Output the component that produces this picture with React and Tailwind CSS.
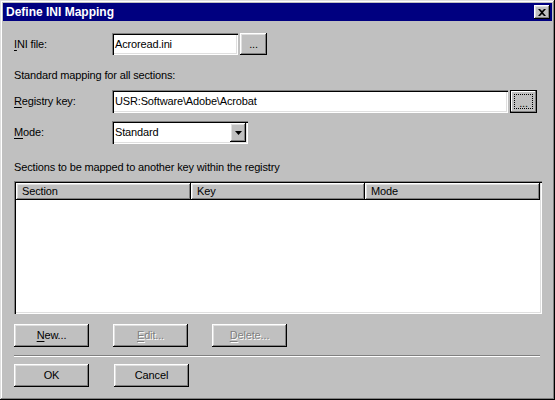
import React from 'react';

const raised =
  'bg-[#c0c0c0] shadow-[inset_-1px_-1px_#000,inset_1px_1px_#fff,inset_-2px_-2px_#808080,inset_2px_2px_#dfdfdf]';
const sunken =
  'bg-white shadow-[inset_1px_1px_#808080,inset_2px_2px_#000,inset_-1px_-1px_#fff,inset_-2px_-2px_#dfdfdf]';

function U({ children }) {
  return <span className="underline underline-offset-2">{children}</span>;
}

function Button({ children, disabled, className = '' }) {
  return (
    <button
      className={`${raised} h-[23px] w-[75px] flex items-center justify-center text-[11px] ${
        disabled ? 'text-[#808080] [text-shadow:1px_1px_0_#fff]' : 'text-black'
      } ${className}`}
    >
      {children}
    </button>
  );
}

function Field({ value, className = '' }) {
  return (
    <div className={`${sunken} h-[22px] flex items-center px-[3px] text-[11px] ${className}`}>
      {value}
    </div>
  );
}

export default function App() {
  return (
    <div
      className="w-[555px] h-[400px] bg-[#c0c0c0] p-[3px] flex flex-col tracking-[-0.15px] shadow-[inset_-1px_-1px_#000,inset_1px_1px_#dfdfdf,inset_-2px_-2px_#808080,inset_2px_2px_#fff] text-black"
      style={{ fontFamily: '"Liberation Sans", Arial, sans-serif' }}
    >
      {/* title bar */}
      <div className="h-[18px] bg-[#000080] flex items-center justify-between pl-[3px] pr-[2px]">
        <span className="text-white font-bold text-[12px] tracking-normal">Define INI Mapping</span>
        <div className={`${raised} w-[16px] h-[14px] flex items-center justify-center`}>
          <svg width="8" height="7" viewBox="0 0 8 7">
            <path d="M0 0h2l2 2 2-2h2L5 3.5 8 7H6L4 5 2 7H0l3-3.5z" fill="#000" />
          </svg>
        </div>
      </div>

      <div className="flex flex-col pl-[11px] pr-[13px]">
        {/* INI file */}
        <div className="flex items-center mt-[12px] h-[22px]">
          <span className="w-[98px] text-[11px]">
            <U>I</U>NI file:
          </span>
          <Field value="Acroread.ini" className="w-[126px]" />
          <Button className="!w-[27px] ml-[2px] !h-[22px]">...</Button>
        </div>

        <div className="mt-[13px] h-[15px] text-[11px] flex items-center">Standard mapping for all sections:</div>

        {/* Registry key */}
        <div className="flex items-center mt-[7px] h-[23px]">
          <span className="w-[98px] text-[11px]">
            <U>R</U>egistry key:
          </span>
          <Field value="USR:Software\Adobe\Acrobat" className="w-[396px] !h-[23px]" />
          <button className="ml-[2px] w-[27px] h-[23px] border border-black bg-[#c0c0c0] shadow-[inset_-1px_-1px_#808080,inset_1px_1px_#fff] flex items-center justify-center p-[3px]">
            <span className="w-full h-full border border-dotted border-black flex items-center justify-center text-[11px] leading-none pt-[3px]">
              ...
            </span>
          </button>
        </div>

        {/* Mode */}
        <div className="flex items-center mt-[8px] h-[23px]">
          <span className="w-[98px] text-[11px]">
            <U>M</U>ode:
          </span>
          <div className={`${sunken} w-[136px] h-[23px] flex items-center justify-between pl-[3px] pr-[2px] text-[11px]`}>
            <span>Standard</span>
            <div className={`${raised} w-[16px] h-[19px] flex items-center justify-center`}>
              <svg width="7" height="4" viewBox="0 0 7 4">
                <path d="M0 0h7L3.5 4z" fill="#000" />
              </svg>
            </div>
          </div>
        </div>

        <div className="mt-[16px] h-[15px] text-[11px] flex items-center">
          Sections to be mapped to another key within the registry
        </div>

        {/* list */}
        <div className={`${sunken} mt-[6px] w-[528px] h-[133px] p-[2px] flex flex-col`}>
          <div className="flex h-[17px] text-[11px]">
            <div className={`${raised} w-[175px] flex items-center pl-[6px]`}>Section</div>
            <div className={`${raised} w-[174px] flex items-center pl-[6px]`}>Key</div>
            <div className={`${raised} w-[175px] flex items-center pl-[6px]`}>Mode</div>
          </div>
          <div className="flex-1 bg-white" />
        </div>

        {/* action buttons */}
        <div className="flex gap-[24px] mt-[10px]">
          <Button>
            <U>N</U>ew...
          </Button>
          <Button disabled>
            <U>E</U>dit...
          </Button>
          <Button disabled>
            <U>D</U>elete...
          </Button>
        </div>

        {/* separator */}
        <div className="mt-[8px] w-[526px] h-[2px] border-t border-[#808080] border-b border-b-white" />

        <div className="flex gap-[25px] mt-[7px]">
          <Button>OK</Button>
          <Button>Cancel</Button>
        </div>
      </div>
    </div>
  );
}
